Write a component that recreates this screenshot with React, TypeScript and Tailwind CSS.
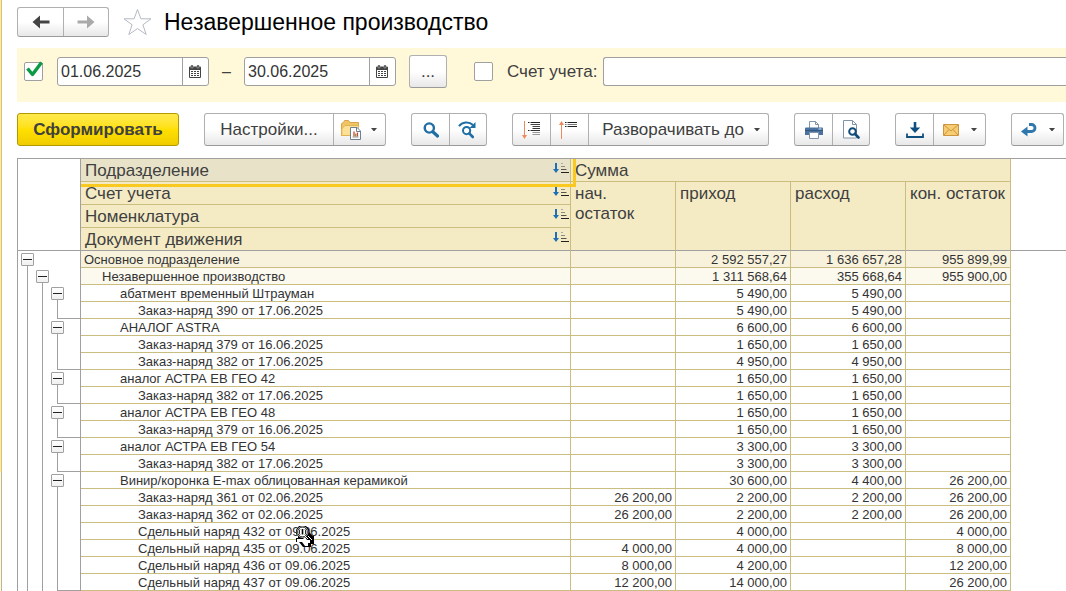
import type { ReactNode } from "react";

type Row = {
  level: number;
  name: string;
  start?: string;
  income?: string;
  expense?: string;
  end?: string;
  last?: boolean;
};

const rows: Row[] = [
  { level: 0, name: "Основное подразделение", income: "2 592 557,27", expense: "1 636 657,28", end: "955 899,99" },
  { level: 1, name: "Незавершенное производство", income: "1 311 568,64", expense: "355 668,64", end: "955 900,00" },
  { level: 2, name: "абатмент временный Штрауман", income: "5 490,00", expense: "5 490,00" },
  { level: 3, name: "Заказ-наряд 390 от 17.06.2025", income: "5 490,00", expense: "5 490,00", last: true },
  { level: 2, name: "АНАЛОГ ASTRA", income: "6 600,00", expense: "6 600,00" },
  { level: 3, name: "Заказ-наряд 379 от 16.06.2025", income: "1 650,00", expense: "1 650,00" },
  { level: 3, name: "Заказ-наряд 382 от 17.06.2025", income: "4 950,00", expense: "4 950,00", last: true },
  { level: 2, name: "аналог АСТРА ЕВ ГЕО 42", income: "1 650,00", expense: "1 650,00" },
  { level: 3, name: "Заказ-наряд 382 от 17.06.2025", income: "1 650,00", expense: "1 650,00", last: true },
  { level: 2, name: "аналог АСТРА ЕВ ГЕО 48", income: "1 650,00", expense: "1 650,00" },
  { level: 3, name: "Заказ-наряд 379 от 16.06.2025", income: "1 650,00", expense: "1 650,00", last: true },
  { level: 2, name: "аналог АСТРА ЕВ ГЕО 54", income: "3 300,00", expense: "3 300,00" },
  { level: 3, name: "Заказ-наряд 382 от 17.06.2025", income: "3 300,00", expense: "3 300,00", last: true },
  { level: 2, name: "Винир/коронка E-max облицованная керамикой", income: "30 600,00", expense: "4 400,00", end: "26 200,00" },
  { level: 3, name: "Заказ-наряд 361 от 02.06.2025", start: "26 200,00", income: "2 200,00", expense: "2 200,00", end: "26 200,00" },
  { level: 3, name: "Заказ-наряд 362 от 02.06.2025", start: "26 200,00", income: "2 200,00", expense: "2 200,00", end: "26 200,00" },
  { level: 3, name: "Сдельный наряд 432 от 09.06.2025", income: "4 000,00", end: "4 000,00" },
  { level: 3, name: "Сдельный наряд 435 от 09.06.2025", start: "4 000,00", income: "4 000,00", end: "8 000,00" },
  { level: 3, name: "Сдельный наряд 436 от 09.06.2025", start: "8 000,00", income: "4 200,00", end: "12 200,00" },
  { level: 3, name: "Сдельный наряд 437 от 09.06.2025", start: "12 200,00", income: "14 000,00", end: "26 200,00", last: true },
];

const indents = ["pl-[3px]", "pl-[21px]", "pl-[39px]", "pl-[57px]"];
const rowColors = ["bg-[#f8f2dc]", "bg-[#fcf9ee]", "bg-white", "bg-white"];

const face = "bg-linear-to-b from-white from-50% to-[#e8e8e8]";

function Group({ children, className = "" }: { children: ReactNode; className?: string }) {
  return (
    <div
      className={`flex shrink-0 overflow-hidden rounded-[3px] border border-[#b0b0b0] border-b-[#9a9a9a] ${face} ${className}`}
    >
      {children}
    </div>
  );
}

function Tool({ label, className = "", children }: { label?: string; className?: string; children: ReactNode }) {
  return (
    <button
      type="button"
      aria-label={label}
      className={`flex items-center justify-center border-[#b0b0b0] not-first:border-l ${className}`}
    >
      {children}
    </button>
  );
}

function Caret() {
  return (
    <svg width="6" height="3" viewBox="0 0 6 3" aria-hidden="true">
      <path d="M0 0h6L3.500 3h-1z" fill="#444" />
    </svg>
  );
}

function Arrow({ color, flip }: { color: string; flip?: boolean }) {
  return (
    <svg width="18" height="14" viewBox="0 0 18 14" aria-hidden="true" className={flip ? "rotate-180" : ""}>
      <path d="M0.500 7 8 0.500V5.500H17.500V8.500H8V13.500z" fill={color} />
    </svg>
  );
}

function CalendarIcon() {
  return (
    <svg width="12" height="14" viewBox="0 0 12 14" aria-hidden="true">
      <path d="M1 1.500h10a1 1 0 0 1 1 1V12a1 1 0 0 1-1 1H1a1 1 0 0 1-1-1V2.500a1 1 0 0 1 1-1z" fill="#444" />
      <path d="M1 5h10v7H1z" fill="#fff" />
      <path
        d="M2 6h2v1H2zM5 6h2v1H5zM8 6h2v1H8zM2 8h2v1H2zM5 8h2v1H5zM8 8h2v1H8zM2 10h2v1H2zM5 10h2v1H5zM8 10h2v1H8z"
        fill="#444"
      />
      <path d="M2 0h2v3H2zM8 0h2v3H8z" fill="#444" stroke="#bbb" strokeWidth="0.500" />
    </svg>
  );
}

function FolderReportIcon() {
  return (
    <svg width="20" height="20" viewBox="0 0 20 20" aria-hidden="true">
      <path d="M0.500 15.500V3.500L2.500 2.500 3.500 0.500h4l1.500 2h8.500v3l-2 10z" fill="#f0c465" stroke="#d9a548" />
      <path d="M4 5.500h13.500L15.500 15.500H0.800V9z" fill="#fbe096" stroke="#e0ad4a" strokeWidth="0.800" />
      <path d="M9.500 7.500h6.500l3.500 3.500v8.500h-10z" fill="#fff" stroke="#6b7f95" />
      <path d="M15.500 7.500v4h4" fill="none" stroke="#6b7f95" />
      <path d="M13 11.500v5" stroke="#e23b2e" strokeWidth="1.300" />
      <path d="M14.800 13.500v3" stroke="#3fa648" strokeWidth="1.300" />
      <path d="M16.500 12.500v4" stroke="#e23b2e" strokeWidth="1.200" />
      <path d="M11.500 17h6" stroke="#777" strokeWidth="0.800" />
    </svg>
  );
}

function SearchIcon() {
  return (
    <svg width="16" height="16" viewBox="0 0 16 16" fill="none" stroke="#1f6ea5" aria-hidden="true">
      <circle cx="6.300" cy="6" r="4.600" strokeWidth="2.400" />
      <path d="m9.800 9.800 4.700 4.200" strokeWidth="3.200" strokeLinecap="round" />
    </svg>
  );
}

function SearchNextIcon() {
  return (
    <svg width="18" height="18" viewBox="0 0 18 18" fill="none" stroke="#1f6ea5" aria-hidden="true">
      <path d="M1 5.300C4 0.600 11 0.200 15 4" strokeWidth="2" />
      <path d="M17.500 1v6h-6z" fill="#1f6ea5" stroke="none" />
      <circle cx="8.600" cy="9.600" r="3.600" strokeWidth="2" />
      <path d="m11.300 12.300 3.500 3.700" strokeWidth="2.600" strokeLinecap="round" />
    </svg>
  );
}

function ExpandIcon() {
  return (
    <svg width="19" height="18" viewBox="0 0 19 18" aria-hidden="true">
      <path d="M2.500 0v15" stroke="#f08a5c" />
      <path d="M0 14h5l-2.500 4z" fill="#f08a5c" />
      <path d="M6 1.500h1.500M8.500 1.500H18M6 9.500h1.500" stroke="#222" />
      <path d="M8.500 3.500H18M10.500 5.500H18" stroke="#444" />
      <path d="M10.500 7.500H18M8.500 9.500H18" stroke="#333" />
      <path d="M10.500 11.500H18M10.500 13.500H18" stroke="#999" />
    </svg>
  );
}

function CollapseIcon() {
  return (
    <svg width="19" height="18" viewBox="0 0 19 18" aria-hidden="true">
      <path d="M2.500 3v15" stroke="#f08a5c" />
      <path d="M0 4h5L2.500 0z" fill="#f08a5c" />
      <path d="M6 1.500h1.500M8.500 1.500H18M6 5.500h1.500M8.500 5.500H18" stroke="#222" />
      <path d="M6 3.500h1.500M8.500 3.500H18" stroke="#777" />
    </svg>
  );
}

function PrintIcon() {
  return (
    <svg width="18" height="18" viewBox="0 0 18 18" aria-hidden="true">
      <path d="M4.500 7.500v-7h6l3 3v4z" fill="#fff" stroke="#8294a8" />
      <path d="M10.500 0.500v3h3" fill="none" stroke="#8294a8" />
      <path d="M1 6.500h16a1 1 0 0 1 1 1V14H0V7.500a1 1 0 0 1 1-1z" fill="#4a72a0" />
      <path d="M0 9.500h18" stroke="#35587f" />
      <path d="M13.500 8h3" stroke="#cfe0ee" />
      <path d="M4.500 11.500h9v6h-9z" fill="#fff" stroke="#8294a8" />
    </svg>
  );
}

function PreviewIcon() {
  return (
    <svg width="17" height="19" viewBox="0 0 17 19" fill="none" aria-hidden="true">
      <path d="M0.500 0.500h9l4 4v13.500H0.500z" fill="#fff" stroke="#8294a8" />
      <path d="M9.500 0.500v4h4" stroke="#8294a8" />
      <circle cx="9.500" cy="11.500" r="3.300" fill="#fff" stroke="#0f4c7a" strokeWidth="2" />
      <path d="m12 14 3.500 3.500" stroke="#0f4c7a" strokeWidth="2.600" strokeLinecap="round" />
    </svg>
  );
}

function SaveIcon() {
  return (
    <svg width="18" height="16" viewBox="0 0 18 16" aria-hidden="true">
      <path d="M7.700 0h2.600v5.500h3.900L9 11 3.800 5.500h3.900z" fill="#0f4f80" />
      <path d="M1 11.500v3.500h16v-3.500" fill="none" stroke="#0f4f80" strokeWidth="1.800" />
    </svg>
  );
}

function MailIcon() {
  return (
    <svg width="16" height="12" viewBox="0 0 16 12" fill="none" stroke="#cf9440" aria-hidden="true">
      <path d="M0.500 0.500h15v11H0.500z" fill="#f7cd73" />
      <path d="m1 1 7 6 7-6M1 11l5-5.500M15 11l-5-5.500" />
    </svg>
  );
}

function ReturnIcon() {
  return (
    <svg width="16" height="14" viewBox="0 0 16 14" aria-hidden="true">
      <path d="M8 1.500h2.500a3.500 3.500 0 0 1 0 7H5" fill="none" stroke="#2f78ad" strokeWidth="2.800" />
      <path d="M0 8.500 6.500 3.500v10z" fill="#2f78ad" />
    </svg>
  );
}

function SortIcon() {
  return (
    <svg width="16" height="12" viewBox="0 0 16 12" aria-hidden="true">
      <path d="M3 1v7" stroke="#1f6fb5" strokeWidth="2" />
      <path d="M0 7h6L3 11z" fill="#1f6fb5" />
      <path d="M8 1.500h2" stroke="#aaa" />
      <path d="M8 4.500h4" stroke="#8c8c80" />
      <path d="M8 7.500h5.500" stroke="#55554d" />
      <path d="M8 10.500h8" stroke="#222" />
    </svg>
  );
}

function PointerIcon() {
  return (
    <svg width="20" height="24" viewBox="0 0 20 24" aria-hidden="true">
      <path d="M4 1h7l3 3v3l2 2 2 2h1v8h-3v3h-8l-4-5H1v-4h2v-2L1 9V5z" fill="#000" />
      <circle cx="7.500" cy="7" r="5" fill="#fff" stroke="#000" />
      <circle cx="7.500" cy="7" r="5.500" fill="none" stroke="#fff" strokeWidth="0.600" />
      <path d="M5 4.500C4 6 4 8 5 9.500M10 4.500c1 1.500 1 3.500 0 5" fill="none" stroke="#000" />
      <path d="M7.500 4v5.500" stroke="#000" strokeWidth="1.600" />
      <path d="M2 14h6l2-2 2 3h3v3h-2v3h-3l-3-4H2z" fill="#fff" />
      <path d="m10 11 3 3M13 11l4 4" stroke="#fff" />
    </svg>
  );
}

function CheckField({ id, label, checked }: { id: string; label: string; checked?: boolean }) {
  return (
    <span className="relative flex shrink-0">
      <input
        id={id}
        type="checkbox"
        aria-label={label}
        defaultChecked={checked}
        className="peer size-[19px] appearance-none rounded-[2px] border border-[#a0a0a0] bg-white"
      />
      <svg
        width="17"
        height="16"
        viewBox="0 0 17 16"
        className="pointer-events-none absolute -top-px left-[2px] hidden peer-checked:block"
        aria-hidden="true"
      >
        <path d="M1.500 7.500 6.500 13.500 15.500 1.500" fill="none" stroke="#0b9a45" strokeWidth="3.400" strokeLinejoin="round" />
      </svg>
    </span>
  );
}

function DateField({ label, value }: { label: string; value: string }) {
  return (
    <div className="flex h-[29px] w-[152px] shrink-0 overflow-hidden rounded-[3px] border border-[#a0a0a0] bg-white">
      <input type="text" aria-label={label} defaultValue={value} className="min-w-0 flex-1 px-[3px] text-[#333]" />
      <button
        type="button"
        aria-label={`${label}: календарь`}
        className="flex w-[26px] items-center justify-center border-l border-[#a0a0a0] pr-px"
      >
        <CalendarIcon />
      </button>
    </div>
  );
}

function HeadCell({ title, active }: { title: string; active?: boolean }) {
  return (
    <th
      scope="col"
      className={`h-[23px] border-r border-b border-[#c9bd80] p-0 font-normal in-[.head-last]:border-b-[#a0a0a0] ${active ? "bg-[#e8e3c8]" : "bg-[#f4ebc5]"}`}
    >
      <div className="flex h-[22px] items-center justify-between pr-px pl-1">
        <span className="pt-px">{title}</span>
        <button type="button" aria-label={`Сортировка: ${title}`} className="mb-1">
          <SortIcon />
        </button>
      </div>
    </th>
  );
}

function TreeCell({ row }: { row: Row }) {
  return (
    <td className="border-x border-[#a0a0a0] bg-white p-0">
      <div className="flex h-[17px] gap-[2px] pl-[3px]">
        {[0, 1, 2].map((slot) => (
          <div key={slot} className={slot === 2 ? "flex-1" : "w-[13px]"}>
            {slot === row.level && (
              <div className="flex h-full flex-col pt-[2px]">
                <button
                  type="button"
                  aria-label={`Свернуть: ${row.name}`}
                  className="flex size-[13px] shrink-0 justify-center rounded-[1px] border border-[#a0a0a0] bg-linear-to-b from-white to-[#f0f0f0] pt-[5px]"
                >
                  <span className="h-px w-[9px] bg-[#222]" />
                </button>
                <div className="ml-[6px] flex-1 border-l border-[#a0a0a0]" />
              </div>
            )}
            {slot < row.level && (
              <div
                className={`ml-[6px] h-full border-l border-[#a0a0a0] ${slot === 2 && row.last ? "border-b" : ""}`}
              />
            )}
          </div>
        ))}
      </div>
    </td>
  );
}

const bodyCell = "h-[17px] border-r border-b border-[#c9bd80] pt-px pb-0 whitespace-nowrap";
const sumHead =
  "border-r border-b border-r-[#c9bd80] border-b-[#a0a0a0] bg-[#f4ebc5] px-1 pt-[2px] pb-0 align-top font-normal";

export default function App() {
  return (
    <div className="flex min-h-screen overflow-x-hidden bg-white font-['Liberation_Sans',Arial,sans-serif] text-[17px] leading-5 text-[#404040]">
      <div className="flex w-[2px] shrink-0 flex-col">
        <div className="h-[472px] border-r border-[#d6c375] bg-[#fbe9a0]" />
        <div className="flex-1 border-r border-[#c4b878] bg-[#f7f7f7]" />
      </div>

      <main className="min-w-0 flex-1 pt-[7px] pl-[15px]">
        <header className="flex h-[30px] items-center">
          <Group className="h-[30px]">
            <Tool label="Назад" className="w-[45px]">
              <Arrow color="#444" />
            </Tool>
            <Tool label="Вперед" className="w-[45px]">
              <Arrow color="#aaa" flip />
            </Tool>
          </Group>
          <button type="button" aria-label="Добавить в избранное" className="ml-[14px]">
            <svg width="29" height="28" viewBox="0 0 29 28" aria-hidden="true">
              <path
                d="M14.500 1.500 17.900 10.800H28L19.900 16.800 23.200 26.500 14.500 20.600 5.800 26.500 9.100 16.800 1 10.800H11.100z"
                fill="none"
                stroke="#b4bac4"
              />
            </svg>
          </button>
          <h1 className="ml-3 text-[23px] text-black">Незавершенное производство</h1>
        </header>

        <section className="mt-[11px] flex h-[54px] items-start bg-[#fff8d9] pt-[7px] pl-[7px]">
          <div className="flex h-[33px] flex-1 items-center">
            <CheckField id="use-period" label="Период" checked />
            <div className="ml-[14px] flex items-center text-base">
              <DateField label="Начало периода" value="01.06.2025" />
              <span className="w-[35px] text-center">–</span>
              <DateField label="Конец периода" value="30.06.2025" />
            </div>
            <Group className="ml-[13px] h-[33px] w-[38px]">
              <Tool label="Выбрать период" className="flex-1">
                ...
              </Tool>
            </Group>
            <div className="ml-[27px] flex flex-1 items-center">
              <CheckField id="use-account" label="Отбор по счету учета" />
              <label htmlFor="account" className="ml-[14px] shrink-0">
                Счет учета:
              </label>
              <input
                id="account"
                type="text"
                className="ml-[6px] h-[29px] min-w-0 flex-1 rounded-l-[3px] border border-r-0 border-[#a0a0a0] bg-white px-1"
              />
            </div>
          </div>
        </section>

        <div role="toolbar" className="mt-[11px] flex h-[33px] gap-[25px]">
          <button
            type="button"
            className="w-[162px] shrink-0 rounded-[3px] border border-[#b09a00] bg-linear-to-b from-[#ffe94a] via-[#ffe000] to-[#f0cc00] font-bold"
          >
            Сформировать
          </button>
          <Group className="w-[182px]">
            <Tool className="flex-1">Настройки...</Tool>
            <Tool label="Варианты отчета" className="w-[52px] gap-[10px] pr-[2px]">
              <FolderReportIcon />
              <Caret />
            </Tool>
          </Group>
          <Group className="w-[76px]">
            <Tool label="Найти" className="w-[37px]">
              <SearchIcon />
            </Tool>
            <Tool label="Найти далее" className="flex-1 pr-[2px]">
              <SearchNextIcon />
            </Tool>
          </Group>
          <Group className="w-[257px]">
            <Tool label="Развернуть группы" className="w-[37px]">
              <ExpandIcon />
            </Tool>
            <Tool label="Свернуть группы" className="w-[38px] pr-[2px]">
              <CollapseIcon />
            </Tool>
            <Tool className="flex-1 gap-[10px] pl-[5px]">
              Разворачивать до
              <Caret />
            </Tool>
          </Group>
          <Group className="w-[76px]">
            <Tool label="Печать" className="w-[37px]">
              <PrintIcon />
            </Tool>
            <Tool label="Предварительный просмотр" className="flex-1">
              <PreviewIcon />
            </Tool>
          </Group>
          <Group className="w-[91px]">
            <Tool label="Сохранить" className="w-[37px]">
              <SaveIcon />
            </Tool>
            <Tool label="Отправить по почте" className="flex-1 gap-3">
              <MailIcon />
              <Caret />
            </Tool>
          </Group>
          <Group className="w-[53px]">
            <Tool label="Расшифровка" className="flex-1 gap-3 pl-px">
              <ReturnIcon />
              <Caret />
            </Tool>
          </Group>
        </div>

        <div className="relative mt-3 border-t border-[#a0a0a0]">
          <table className="w-full table-fixed border-separate border-spacing-0 text-left">
            <colgroup>
              <col className="w-[64px]" />
              <col className="w-[490px]" />
              <col className="w-[105px]" />
              <col className="w-[115px]" />
              <col className="w-[115px]" />
              <col className="w-[105px]" />
              <col />
            </colgroup>
            <thead>
              <tr>
                <td rowSpan={4} className="border-x border-b border-[#a0a0a0]" />
                <HeadCell title="Подразделение" active />
                <th
                  scope="colgroup"
                  colSpan={4}
                  className="border-r border-b border-[#c9bd80] bg-[#f4ebc5] px-1 pt-px pb-0 font-normal"
                >
                  Сумма
                </th>
                <td rowSpan={4} className="border-b border-[#a0a0a0]" />
              </tr>
              <tr>
                <HeadCell title="Счет учета" />
                <th scope="col" rowSpan={3} className={sumHead}>
                  нач.
                  <br />
                  остаток
                </th>
                <th scope="col" rowSpan={3} className={sumHead}>
                  приход
                </th>
                <th scope="col" rowSpan={3} className={sumHead}>
                  расход
                </th>
                <th scope="col" rowSpan={3} className={`${sumHead} whitespace-nowrap`}>
                  кон. остаток
                </th>
              </tr>
              <tr>
                <HeadCell title="Номенклатура" />
              </tr>
              <tr className="head-last">
                <HeadCell title="Документ движения" />
              </tr>
            </thead>
            <tbody className="text-[13px] leading-[15px] text-[#333]">
              {rows.map((row, i) => (
                <tr key={i} className={rowColors[row.level]}>
                  <TreeCell row={row} />
                  <td className={`${bodyCell} ${indents[row.level]}`}>{row.name}</td>
                  {[row.start, row.income, row.expense, row.end].map((value, c) => (
                    <td key={c} className={`${bodyCell} pr-[3px] pl-0 text-right`}>
                      {value}
                    </td>
                  ))}
                  <td className="bg-white p-0" />
                </tr>
              ))}
            </tbody>
          </table>

          <div className="pointer-events-none absolute top-0 left-[64px] h-[28px] w-[495px] border-r-3 border-b-3 border-[#f9c920]" />
          <div className="pointer-events-none absolute top-[366px] left-[278px]">
            <PointerIcon />
          </div>
        </div>
      </main>
    </div>
  );
}
